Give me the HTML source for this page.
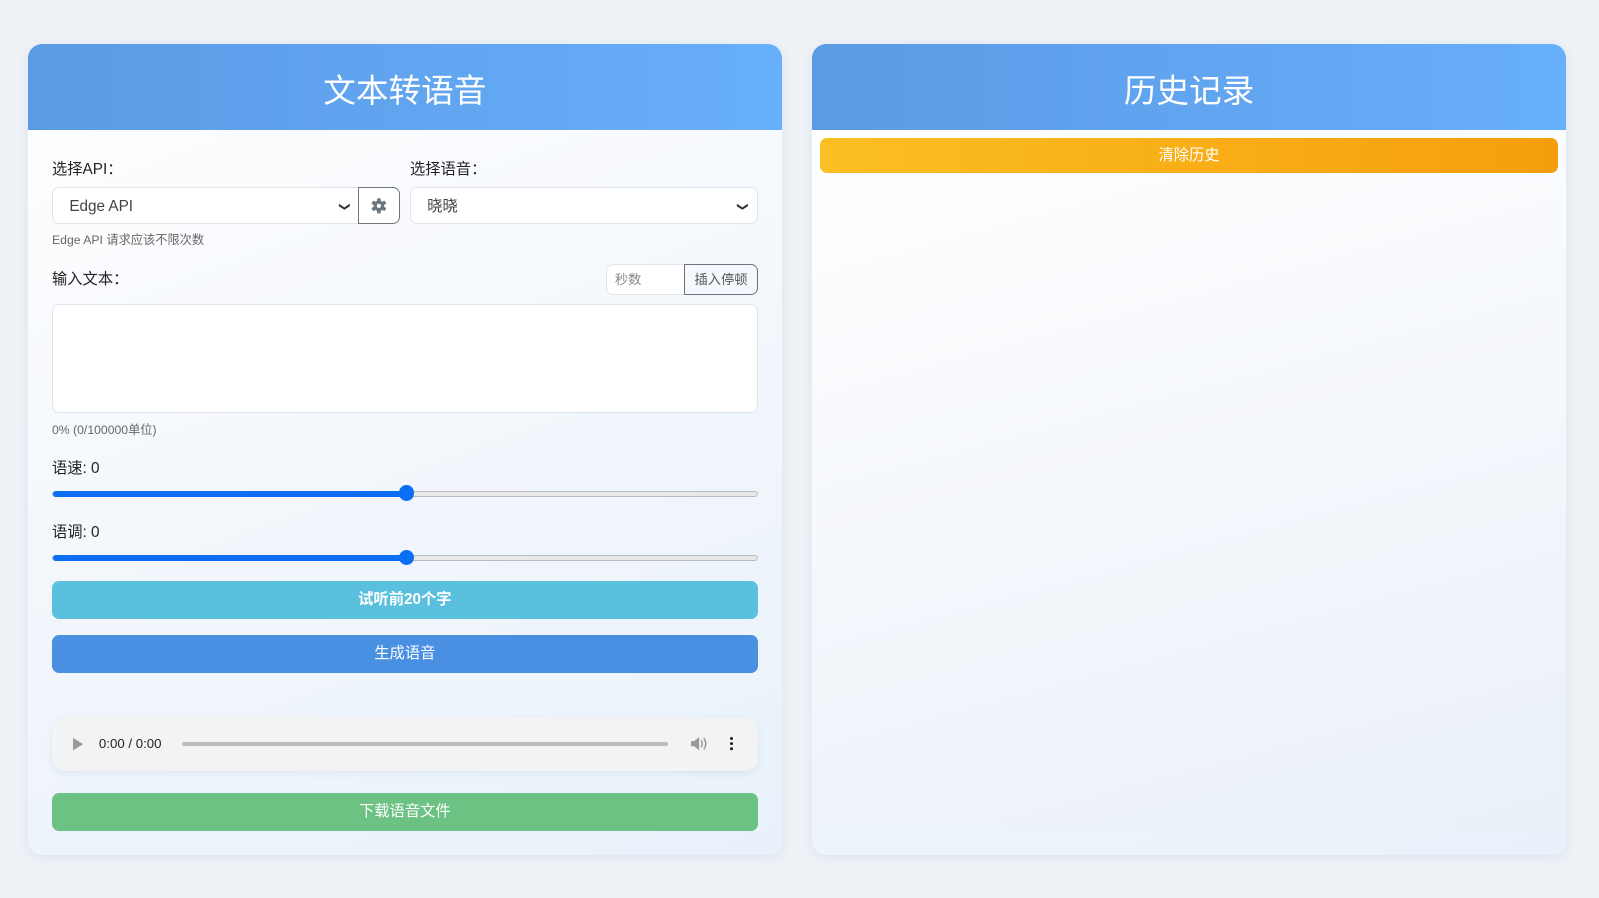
<!DOCTYPE html>
<html><head><meta charset="utf-8">
<style>
html,body{margin:0;padding:0;}
body{width:1568px;height:881px;background:#eef2f7;zoom:1.0198;position:relative;overflow:hidden;font-family:"Liberation Sans","Noto Sans CJK SC",sans-serif;color:#333;}
.card{position:absolute;top:43px;width:740px;height:795px;border-radius:14px;overflow:hidden;background:linear-gradient(160deg,#ffffff 0%,#f3f7fc 50%,#e8f1fa 100%);box-shadow:0 2px 10px rgba(120,140,170,.15);}
.hdr{position:absolute;left:0;top:0;width:100%;height:84px;background:linear-gradient(90deg,#5b9be5,#67aefb);color:#fff;font-size:32px;text-align:center;line-height:92px;}
.a{position:absolute;}
.lbl{font-size:15px;color:#222;}
.sel{position:absolute;background:#fff;border:1px solid #dfe4ea;border-radius:7px;box-sizing:border-box;font-size:15px;color:#444;padding-left:16px;line-height:37px;}
.chev{position:absolute;right:10px;top:0;font-size:11px;color:#333;transform:rotate(90deg);}
.small{font-size:12px;color:#666;}
.btn{position:absolute;left:24px;width:692px;height:37px;border-radius:7px;color:#fff;text-align:center;line-height:38px;font-size:15px;}
.track{position:absolute;left:24px;width:692px;height:6px;border-radius:3px;background:#e8e8e8;border:1px solid #bbb;box-sizing:border-box;}
.fill{position:absolute;left:0;top:-1px;height:6px;width:346px;background:#0b6ff5;border-radius:3px;}
.thumb{position:absolute;left:339px;top:-6px;width:15px;height:15px;border-radius:50%;background:#0b6ff5;}
</style></head><body>
<div class="card" style="left:27px;">
  <div class="hdr">文本转语音</div>
  <div class="a lbl" style="left:24px;top:111px;">选择API：</div>
  <div class="a lbl" style="left:375px;top:111px;">选择语音：</div>
  <div class="sel" style="left:24px;top:140px;width:302px;height:37px;border-radius:7px 0 0 7px;">Edge API<span class="chev">&#10095;</span></div>
  <div class="a" style="left:324px;top:140px;width:41px;height:37px;border:1px solid #6c757d;border-radius:0 7px 7px 0;box-sizing:border-box;background:#fff;">
    <svg width="39" height="35" viewBox="0 0 39 35"><g transform="translate(19.5,17.5)" fill="#6c757d"><circle r="5.2"/><g><rect x="-1.8" y="-7.5" width="3.6" height="15" rx="1"/><rect x="-1.8" y="-7.5" width="3.6" height="15" rx="1" transform="rotate(60)"/><rect x="-1.8" y="-7.5" width="3.6" height="15" rx="1" transform="rotate(120)"/></g><circle r="2" fill="#fff"/></g></svg>
  </div>
  <div class="sel" style="left:375px;top:140px;width:341px;height:37px;">晓晓<span class="chev">&#10095;</span></div>
  <div class="a small" style="left:24px;top:183px;">Edge API 请求应该不限次数</div>
  <div class="a lbl" style="left:24px;top:219px;">输入文本：</div>
  <div class="a" style="left:567px;top:216px;width:78px;height:30px;background:#fff;border:1px solid #e2e6ea;border-radius:7px 0 0 7px;box-sizing:border-box;font-size:13px;color:#888;line-height:30px;padding-left:8px;">秒数</div>
  <div class="a" style="left:644px;top:216px;width:72px;height:30px;border:1px solid #6c757d;border-radius:0 7px 7px 0;box-sizing:border-box;font-size:13px;color:#555;line-height:30px;text-align:center;">插入停顿</div>
  <div class="a" style="left:24px;top:255px;width:692px;height:107px;background:#fff;border:1px solid #dfe4ea;border-radius:7px;box-sizing:border-box;"></div>
  <div class="a small" style="left:24px;top:369px;">0% (0/100000单位)</div>
  <div class="a lbl" style="left:24px;top:404px;">语速: 0</div>
  <div class="track" style="top:438px;"><div class="fill"></div><div class="thumb"></div></div>
  <div class="a lbl" style="left:24px;top:467px;">语调: 0</div>
  <div class="track" style="top:501px;"><div class="fill"></div><div class="thumb"></div></div>
  <div class="btn" style="top:527px;background:#5bc0de;font-weight:bold;font-size:15px;">试听前20个字</div>
  <div class="btn" style="top:580px;background:#4a90e2;">生成语音</div>
  <div class="a" style="left:24px;top:660px;width:692px;height:53px;background:#f1f3f4;border-radius:12px;box-shadow:0 2px 6px rgba(120,140,170,.12);">
    <svg class="a" style="left:20px;top:20px;" width="12" height="14"><path d="M1 1 L11 7 L1 13 Z" fill="#999"/></svg>
    <div class="a" style="left:46px;top:19px;font-size:13px;color:#222;">0:00 / 0:00</div>
    <div class="a" style="left:127px;top:25px;width:477px;height:4px;background:#bdbdbd;border-radius:2px;"></div>
    <svg class="a" style="left:626px;top:18px;" width="18" height="17" viewBox="0 0 18 17"><path d="M1 6h3l5-4v13l-5-4H1z" fill="#999"/><path d="M11 5q2 3.5 0 7M13.5 3q4 5.5 0 11" stroke="#999" stroke-width="1.4" fill="none"/></svg>
    <div class="a" style="left:665px;top:20px;width:3px;height:3px;background:#222;border-radius:50%;box-shadow:0 5px 0 #222,0 10px 0 #222;"></div>
  </div>
  <div class="btn" style="top:735px;background:#6cc283;">下载语音文件</div>
</div>
<div class="card" style="left:796px;">
  <div class="hdr">历史记录</div>
  <div class="a" style="left:0;top:84px;width:740px;height:686px;background:linear-gradient(165deg,#fff,#eef3fa 80%,#e9f0f8);"></div>
  <div class="a" style="left:8px;top:92px;width:724px;height:35px;border-radius:7px;background:linear-gradient(90deg,#fbbf23,#f59e0c);color:#fff;text-align:center;line-height:36px;font-size:15px;">清除历史</div>
</div>
</body></html>
